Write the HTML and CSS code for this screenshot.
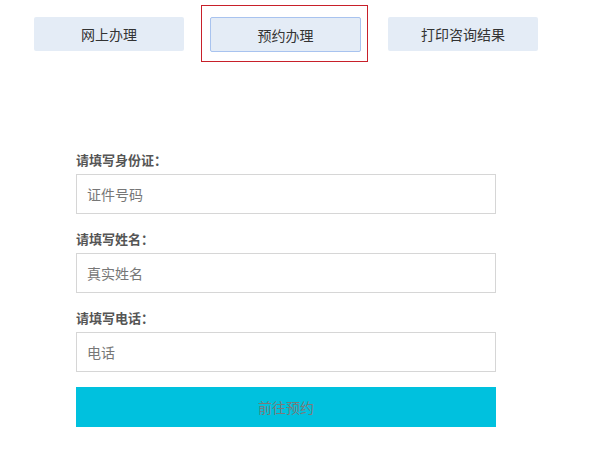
FILE: index.html
```html
<!DOCTYPE html>
<html lang="zh-CN">
<head>
<meta charset="utf-8">
<title>预约办理</title>
<link rel="stylesheet" href="styles.css">
</head>
<body>
<div class="tabs">
  <div class="tab">网上办理</div>
  <div class="tab-wrap"><div class="tab active">预约办理</div></div>
  <div class="tab tab-last">打印咨询结果</div>
</div>
<form class="form">
  <label class="label">请填写身份证：</label>
  <input class="input" type="text" placeholder="证件号码">
  <label class="label">请填写姓名：</label>
  <input class="input" type="text" placeholder="真实姓名">
  <label class="label">请填写电话：</label>
  <input class="input" type="text" placeholder="电话">
  <button class="submit" type="button">前往预约</button>
</form>
</body>
</html>
```
FILE: styles.css
```css
* { box-sizing: border-box; }
body {
  margin: 0;
  background: #fff;
  font-family: "Microsoft YaHei", "Noto Sans CJK SC", "Noto Sans", sans-serif;
  color: #333;
}
.tabs {
  display: flex;
  align-items: flex-start;
  padding: 5px 0 0 34px;
}
.tab {
  width: 150px;
  height: 34px;
  margin-top: 12px;
  background: #e4ecf6;
  border-radius: 2px;
  display: flex;
  align-items: center;
  justify-content: center;
  font-size: 14px;
  color: #333;
}
.tab-wrap {
  margin-left: 17px;
  border-width: 1px;
  border-style: solid;
  border-color: #c8202a;
  padding: 11px 6px 9px 8px;
}
.tab.active {
  margin-top: 0;
  width: 151px;
  height: 35px;
  border: 1px solid #a8c3ef;
}
.tab-last {
  margin-left: 20px;
}
.form {
  display: flex;
  flex-direction: column;
  width: 420px;
  margin: 88px 0 0 76px;
}
.label {
  display: block;
  font-size: 13px;
  font-weight: bold;
  color: #555;
  line-height: 20px;
  margin: 15px 0 4px;
}
.label:first-child { margin-top: 0; }
.input {
  width: 420px;
  height: 40px;
  border: 1px solid #d6d6d6;
  padding: 0 10px;
  font-size: 14px;
  font-family: inherit;
  color: #333;
  outline: none;
  margin: 0;
}
.input::placeholder { color: #777; }
.submit {
  margin-top: 15px;
  width: 420px;
  height: 40px;
  border: 0;
  background: #00c1de;
  color: #7a7a7a;
  font-size: 14px;
  font-family: inherit;
  padding: 0;
}
```
